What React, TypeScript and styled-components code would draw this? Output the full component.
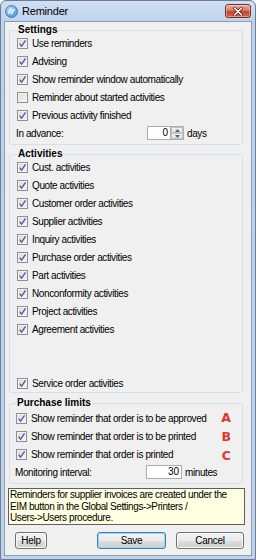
import React from 'react';
import styled, { createGlobalStyle } from 'styled-components';

const GlobalStyle = createGlobalStyle`
  html, body {
    margin: 0;
    padding: 0;
    background: #ffffff;
  }
  body {
    font-family: 'Liberation Sans', Arial, sans-serif;
    color: #000;
  }
`;

// Window chrome
const Window = styled.div`
  box-sizing: border-box;
  width: 256px;
  height: 560px;
  display: flex;
  flex-direction: column;
  border: 1px solid #6d7c92;
  border-radius: 6px 6px 0 0;
  background: linear-gradient(#cfdff3, #bed2ec 21px, #bfd3ec);
  padding: 0 3px 3px 3px;
`;

const TitleBar = styled.div`
  height: 20px;
  display: flex;
  align-items: center;
  padding: 0 1px;
`;

const Title = styled.span`
  margin-left: 4px;
  font-size: 11px;
  letter-spacing: -0.2px;
`;

const CloseButton = styled.div`
  margin-left: auto;
  box-sizing: border-box;
  width: 26px;
  height: 14px;
  border: 1px solid #7b3025;
  border-radius: 3px;
  background: linear-gradient(#eab1a4, #d77a66 45%, #c5432c 55%, #d0674e);
  display: flex;
  align-items: center;
  justify-content: center;
  box-shadow: inset 0 0 0 1px rgba(255, 255, 255, 0.35);
`;

const Body = styled.div`
  flex: 1;
  display: flex;
  flex-direction: column;
  border: 1px solid #8a9bb4;
  background: #f0f0f0;
  padding: 0 6px 0 4px;
`;

// Groups
const Group = styled.fieldset<{ top: number; padTop?: number; padBottom?: number; padLeft?: number }>`
  margin: ${({ top }) => top}px 2px 0 0;
  padding: ${({ padTop = 0 }) => padTop}px 6px ${({ padBottom = 2 }) => padBottom}px
    ${({ padLeft = 7 }) => padLeft}px;
  border: 1px solid #d5dfe5;
  border-radius: 3px;
  min-width: 0;
`;

const Legend = styled.legend`
  padding: 0 1px;
  font-size: 10px;
  font-weight: bold;
  line-height: 8px;
`;

const Row = styled.div`
  height: 18px;
  display: flex;
  align-items: center;
`;

const Spacer = styled.div<{ h: number }>`
  height: ${({ h }) => h}px;
`;

const Box = styled.span`
  box-sizing: border-box;
  width: 11px;
  height: 11px;
  flex: none;
  border: 1px solid #8e8f8f;
  background: linear-gradient(135deg, #d9d9d9, #f7f7f7);
  box-shadow: inset 0 0 0 1px #f2f2f2;
  display: flex;
  align-items: center;
  justify-content: center;
`;

const Label = styled.span`
  margin-left: 4px;
  font-size: 10px;
  letter-spacing: -0.4px;
  white-space: nowrap;
`;

const FieldLabel = styled.span<{ w: number; shift: number }>`
  width: ${({ w }) => w}px;
  margin-left: ${({ shift }) => shift}px;
  font-size: 10px;
  letter-spacing: -0.4px;
  white-space: nowrap;
`;

const Unit = styled.span`
  margin-left: 3px;
  font-size: 10px;
  letter-spacing: -0.4px;
`;

const Marker = styled.span<{ dy: number }>`
  margin-left: auto;
  margin-right: 5px;
  margin-top: ${({ dy }) => dy}px;
  font-family: 'DejaVu Sans', sans-serif;
  font-weight: bold;
  font-size: 12.5px;
  color: #e5352b;
`;

// Inputs
const TextBox = styled.div<{ w: number }>`
  box-sizing: border-box;
  width: ${({ w }) => w}px;
  height: 14px;
  border: 1px solid #abadb3;
  background: #fff;
  font-size: 10px;
  line-height: 12px;
  text-align: right;
  padding-right: 2px;
`;

const Spin = styled.div`
  display: flex;
  height: 14px;
`;

const SpinButtons = styled.div`
  box-sizing: border-box;
  width: 13px;
  height: 14px;
  display: flex;
  flex-direction: column;
  border: 1px solid #abadb3;
  border-left: none;
  background: #fff;
`;

const SpinButton = styled.div`
  flex: 1;
  display: flex;
  align-items: center;
  justify-content: center;
  background: linear-gradient(#f5f5f5, #dedede);
  border: 1px solid #c4c4c4;
  margin: 0;
`;

// Note
const Note = styled.div`
  margin: 4px 0 0 -1px;
  border: 1px solid #5e5e5e;
  background: #ffffe1;
  padding: 0 1px;
  font-size: 10px;
  letter-spacing: -0.4px;
  line-height: 11.5px;
`;

// Buttons
const ButtonRow = styled.div`
  margin-top: 7px;
  display: flex;
  padding-left: 6px;
`;

const Button = styled.div<{ w: number; gap?: number; primary?: boolean }>`
  box-sizing: border-box;
  width: ${({ w }) => w}px;
  height: 17px;
  margin-left: ${({ gap = 0 }) => gap}px;
  border: 1px solid ${({ primary }) => (primary ? '#3c7fb1' : '#707070')};
  border-radius: 3px;
  background: linear-gradient(#f2f2f2, #ebebeb 50%, #dddddd 51%, #cfcfcf);
  box-shadow: inset 0 0 0 1px ${({ primary }) => (primary ? '#9cd5f6' : '#fbfbfb')};
  display: flex;
  align-items: center;
  justify-content: center;
  font-size: 10px;
  letter-spacing: -0.3px;
`;

const Check = ({ checked = true }: { checked?: boolean }) => (
  <Box>
    {checked && (
      <svg width="9" height="9" viewBox="0 0 9 9">
        <path d="M1.6 4.6 L3.6 7.2 L7.6 1.4" fill="none" stroke="#4a5a9e" strokeWidth="1.3" />
      </svg>
    )}
  </Box>
);

const CheckRow = ({ label, checked = true }: { label: string; checked?: boolean }) => (
  <Row>
    <Check checked={checked} />
    <Label>{label}</Label>
  </Row>
);

const AppIcon = () => (
  <svg width="13" height="13" viewBox="0 0 13 13">
    <defs>
      <radialGradient id="appIconFill" cx="0.4" cy="0.35" r="0.7">
        <stop offset="0" stopColor="#bfe3fb" />
        <stop offset="1" stopColor="#3d8fd6" />
      </radialGradient>
    </defs>
    <circle cx="6.5" cy="6.5" r="6" fill="url(#appIconFill)" stroke="#2f72b8" strokeWidth="0.8" />
    <path d="M3.2 8.6 C4.4 6.6 5.4 5 6.6 3.6" fill="none" stroke="#ffffff" strokeWidth="1.3" />
    <path d="M5.8 9.2 C7 7.2 8 5.6 9.4 4.2" fill="none" stroke="#ffffff" strokeWidth="1.3" />
  </svg>
);

const CloseGlyph = () => (
  <svg width="10" height="9" viewBox="0 0 10 9">
    <path d="M1.5 1 L8.5 8 M8.5 1 L1.5 8" stroke="#5a1a12" strokeWidth="3" strokeLinecap="round" />
    <path d="M1.5 1 L8.5 8 M8.5 1 L1.5 8" stroke="#ffffff" strokeWidth="1.6" strokeLinecap="round" />
  </svg>
);

const Arrow = ({ up }: { up?: boolean }) => (
  <svg width="5" height="3" viewBox="0 0 5 3">
    <path d={up ? 'M0 3 L2.5 0 L5 3 Z' : 'M0 0 L2.5 3 L5 0 Z'} fill="#4d6185" />
  </svg>
);

const activities = [
  'Cust. activities',
  'Quote activities',
  'Customer order activities',
  'Supplier activities',
  'Inquiry activities',
  'Purchase order activities',
  'Part activities',
  'Nonconformity activities',
  'Project activities',
  'Agreement activities'
];

const limits = [
  { label: 'Show reminder that order is to be approved', mark: 'A', dy: -1 },
  { label: 'Show reminder that order is to be printed', mark: 'B', dy: 1 },
  { label: 'Show reminder that order is printed', mark: 'C', dy: 3 }
];

const App = (): JSX.Element => {
  return (
    <>
      <GlobalStyle />
      <Window>
        <TitleBar>
          <AppIcon />
          <Title>Reminder</Title>
          <CloseButton>
            <CloseGlyph />
          </CloseButton>
        </TitleBar>
        <Body>
          <Group top={4}>
            <Legend>Settings</Legend>
            <CheckRow label="Use reminders" />
            <CheckRow label="Advising" />
            <CheckRow label="Show reminder window automatically" />
            <CheckRow label="Reminder about started activities" checked={false} />
            <CheckRow label="Previous activity finished" />
            <Row>
              <FieldLabel w={131} shift={-1}>
                In advance:
              </FieldLabel>
              <Spin>
                <TextBox w={24}>0</TextBox>
                <SpinButtons>
                  <SpinButton>
                    <Arrow up />
                  </SpinButton>
                  <SpinButton>
                    <Arrow />
                  </SpinButton>
                </SpinButtons>
              </Spin>
              <Unit>days</Unit>
            </Row>
          </Group>

          <Group top={5} padBottom={0}>
            <Legend>Activities</Legend>
            {activities.map((item) => (
              <CheckRow key={item} label={item} />
            ))}
            <Spacer h={36} />
            <CheckRow label="Service order activities" />
          </Group>

          <Group top={6} padTop={2} padLeft={6}>
            <Legend>Purchase limits</Legend>
            {limits.map((item) => (
              <Row key={item.mark}>
                <Check />
                <Label>{item.label}</Label>
                <Marker dy={item.dy}>{item.mark}</Marker>
              </Row>
            ))}
            <Row>
              <FieldLabel w={131} shift={-1}>
                Monitoring interval:
              </FieldLabel>
              <TextBox w={36}>30</TextBox>
              <Unit>minutes</Unit>
            </Row>
          </Group>

          <Note>
            Reminders for supplier invoices are created under the
            <br />
            EIM button in the Global Settings-&gt;Printers /
            <br />
            Users-&gt;Users procedure.
          </Note>

          <ButtonRow>
            <Button w={32}>Help</Button>
            <Button w={69} gap={50} primary>
              Save
            </Button>
            <Button w={68} gap={10}>
              Cancel
            </Button>
          </ButtonRow>
        </Body>
      </Window>
    </>
  );
};

export default App;
